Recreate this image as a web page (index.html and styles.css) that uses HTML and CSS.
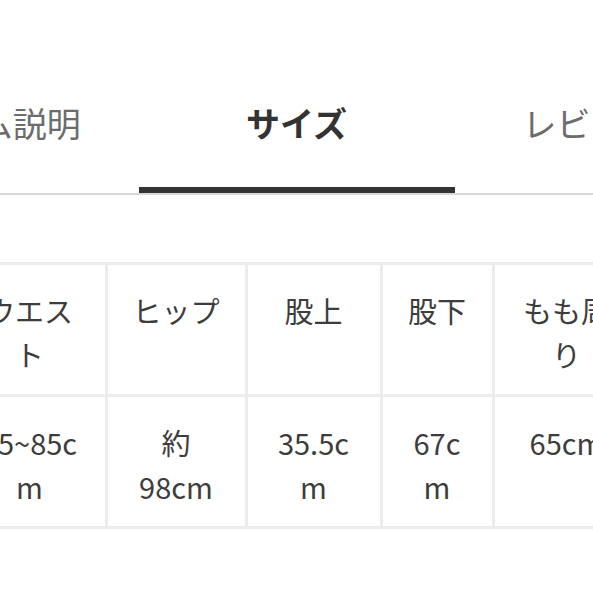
FILE: index.html
```html
<!DOCTYPE html>
<html lang="ja">
<head>
<meta charset="utf-8">
<title>サイズ</title>
<link rel="stylesheet" href="styles.css">
</head>
<body>
<nav class="tabs">
  <div class="tab">アイテム説明</div>
  <div class="tab tab--active">サイズ</div>
  <div class="tab tab--end">レビュー</div>
</nav>
<div class="table-wrap">
  <div class="size-table">
    <div class="cell">ウエスト</div>
    <div class="cell">ヒップ</div>
    <div class="cell">股上</div>
    <div class="cell">股下</div>
    <div class="cell">もも周り</div>
    <div class="cell">65~85cm</div>
    <div class="cell">約98cm</div>
    <div class="cell">35.5cm</div>
    <div class="cell">67cm</div>
    <div class="cell">65cm</div>
  </div>
</div>
</body>
</html>
```

FILE: styles.css
```css
html, body {
  margin: 0;
  padding: 0;
  background: #ffffff;
}

body {
  font-family: "Noto Sans CJK JP", "Noto Sans", sans-serif;
  overflow: hidden;
}

.tabs {
  display: flex;
  justify-content: center;
  overflow: hidden;
  padding-top: 99px;
  border-bottom: 2px solid #d9d9d9;
}

.tab {
  flex: 0 0 316px;
  display: flex;
  justify-content: center;
  white-space: nowrap;
  font-size: 34px;
  line-height: 48px;
  color: #6c6c6c;
  padding-bottom: 40px;
  border-bottom: 6px solid transparent;
}

.tab--active {
  color: #333333;
  font-weight: 700;
  border-bottom-color: #333333;
}

.tab--end {
  justify-content: flex-start;
  padding-left: 68px;
  box-sizing: border-box;
}

.table-wrap {
  display: flex;
  justify-content: center;
  overflow: hidden;
  margin-top: 67px;
}

.size-table {
  flex: none;
  display: grid;
  grid-template-columns: 150px 137px 132px 109px 144px;
  gap: 3px;
  background: #ececec;
  border: 3px solid #ececec;
}

.cell {
  background: #ffffff;
  padding: 23px 24px 18px;
  text-align: center;
  font-size: 29px;
  line-height: 44px;
  color: #3d3d3d;
  overflow-wrap: anywhere;
  min-height: 88px;
}
```
